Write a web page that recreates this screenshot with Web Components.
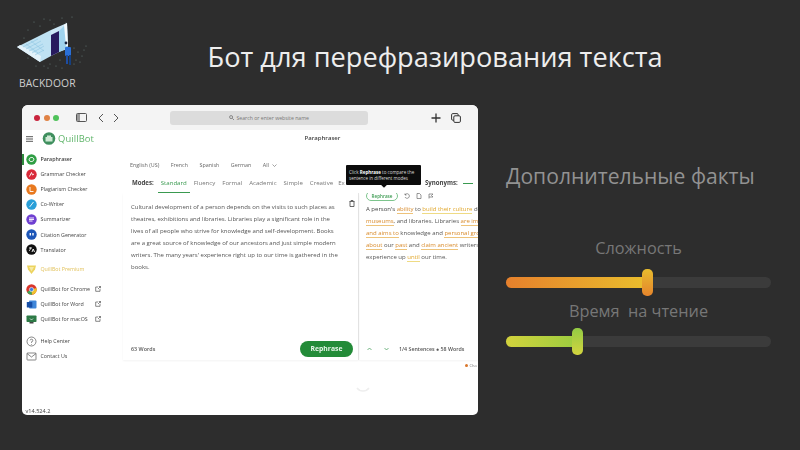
<!doctype html>
<html lang="ru"><head><meta charset="utf-8"><title>Backdoor</title>
<style>
html,body{margin:0;padding:0;background:#2d2d2d}
body{width:800px;height:450px;overflow:hidden;font-family:"Open Sans","Noto Sans",sans-serif}
</style></head><body>
<slide-page>
  <brand-logo slot="logo"></brand-logo>
  <span slot="title">Бот для перефразирования текста</span>
  <browser-window slot="window"></browser-window>
  <facts-panel slot="facts"></facts-panel>
</slide-page>
<script>
function def(name, css, html){
  customElements.define(name, class extends HTMLElement{
    connectedCallback(){
      if(this.shadowRoot) return;
      const r=this.attachShadow({mode:'open'});
      r.innerHTML='<style>'+css+'</style>'+(typeof html==='function'?html(this):html);
    }
  });
}
def('slide-page',`
:host{display:grid;grid-template-columns:22px 456px 28px 265px;grid-template-rows:105px 310px;width:800px;height:450px;color:#eee}
.head{grid-column:1/-1;display:flex;align-items:flex-start}
.logo{width:207.500px;flex:none}
.title{font-size:27.2px;line-height:38px;margin-top:38px;color:#eeeeee;white-space:nowrap}
.win{grid-column:2;grid-row:2}
.facts{grid-column:4;grid-row:2}
`,`<div class="head"><div class="logo"><slot name="logo"></slot></div><div class="title"><slot name="title"></slot></div></div>
<div class="win"><slot name="window"></slot></div><div class="facts"><slot name="facts"></slot></div>`);

def('brand-logo',`
:host{display:block;position:relative;height:105px}
svg{position:absolute;left:14px;top:16px;filter:blur(.35px)}
.t{position:absolute;left:19px;top:76px;font-size:10.3px;line-height:14px;color:#cfcfcf;letter-spacing:.1px}
`,()=>{
 let specks='';const pts=[[20,6],[30,3],[40,8],[48,2],[26,10],[36,4],[58,1],[52,7],[14,14],[60,32],[64,36],[68,40],[62,44],[60,48],[66,46],[70,34],[30,50],[36,48],[42,50],[46,44],[48,52],[34,52],[22,50],[14,42],[72,30],[10,22]];
 pts.forEach(p=>specks+=`<circle cx="${p[0]}" cy="${p[1]}" r=".6" fill="#7d9a96" opacity=".7"/>`);
 return `<svg width="74" height="56" viewBox="0 0 74 56" aria-hidden="true">${specks}
 <polygon points="3,31 37,14 37,40 26,46" fill="#bfe2f3"/>
 <polygon points="3,31 26,46 27,40 6,29" fill="#e4f3fb"/>
 <polygon points="37,14 53,7 53,33 45,36 37,40" fill="#cbe7f6"/>
 <polygon points="37,19 45,15 45,36 37,40" fill="#271a5e"/>
 <polygon points="45,15 53,7 54,32 45,36" fill="#9fd3ee"/>
 <polygon points="50,9 53,7 54,30 52,30" fill="#f6fafc"/>
 <path d="M9 31l15-8M12 33l15-8M15 35l14-7M18 37l12-7M21 39l9-5M12 28l12 9M17 25l13 10" stroke="#8fc6e2" stroke-width=".6"/>
 <rect x="51" y="31" width="6" height="9" rx="1" fill="#2a6fd6"/><rect x="52" y="39" width="2" height="9" fill="#1d4da3"/><rect x="55" y="39" width="2" height="10" fill="#16407f"/>
 <circle cx="52" cy="27" r="1.4" fill="#14213d"/></svg><div class="t">BACKDOOR</div>`;
});

def('browser-window',`
:host{display:flex;flex-direction:column;width:456px;height:310px;background:#fff;border-radius:6px 6px 5px 5px;overflow:hidden;position:relative;color:#444;font-family:"Open Sans",sans-serif;filter:blur(.3px)}
.bar{flex:none;height:25px;background:#f4f4f4;display:flex;align-items:center;padding:0 17px 0 12px}
.dots{display:flex;gap:3.6px}
.dots i{width:6px;height:6px;border-radius:50%}
.ic{margin-left:17px}
.nav{display:flex;gap:9px;margin-left:11px}
.addr{margin-left:51px;width:198px;height:14px;border-radius:3px;background:#dcdcdc;display:flex;align-items:center;justify-content:center;font-size:5.2px;color:#777;gap:2px}
.right{margin-left:auto;display:flex;gap:10px;align-items:center}
.page{flex:1;display:grid;grid-template-columns:99px 1fr;min-height:0}
`,`<div class="bar"><div class="dots"><i style="background:#c9233c"></i><i style="background:#e08244"></i><i style="background:#4fc25a"></i></div>
<svg class="ic" width="11" height="9" viewBox="0 0 11 9"><rect x=".5" y=".5" width="10" height="8" rx="1" fill="none" stroke="#555"/><rect x="1" y="1" width="3" height="7" fill="#999"/></svg>
<div class="nav"><svg width="6" height="10" viewBox="0 0 6 10"><path d="M5 1L1 5l4 4" fill="none" stroke="#555"/></svg><svg width="6" height="10" viewBox="0 0 6 10"><path d="M1 1l4 4-4 4" fill="none" stroke="#555"/></svg></div>
<div class="addr"><svg width="5" height="5" viewBox="0 0 6 6"><circle cx="2.5" cy="2.5" r="1.8" fill="none" stroke="#777"/><path d="M4 4l2 2" stroke="#777"/></svg><span>Search or enter website name</span></div>
<div class="right"><svg width="10" height="10" viewBox="0 0 10 10"><path d="M5 .5v9M.5 5h9" stroke="#333" stroke-width="1.3"/></svg><svg width="10" height="10" viewBox="0 0 10 10"><rect x=".6" y=".6" width="6.6" height="6.6" rx="1.2" fill="none" stroke="#333"/><rect x="2.8" y="2.8" width="6.6" height="6.6" rx="1.2" fill="#f4f4f4" stroke="#333"/></svg></div></div>
<div class="page"><side-nav></side-nav><quill-main></quill-main></div>`);

def('nav-item',`
:host{display:flex;align-items:center;height:15.1px;font-size:5.3px;color:var(--c,#444);white-space:nowrap;position:relative;font-weight:var(--w,400)}
.i{width:11px;height:11px;margin-left:4px;margin-right:3.5px;flex:none;display:flex}
.x{margin-left:auto;flex:none}
::slotted(svg){display:block}
`,h=>`<span class="i"><slot name="icon"></slot></span><slot></slot>${h.hasAttribute('ext')?'<svg class="x" width="6" height="6" viewBox="0 0 6 6"><path d="M3 1H.7v4.3H5V3M3 3l2.5-2.5M3.8.5h1.7v1.7" fill="none" stroke="#555" stroke-width=".7"/></svg>':''}`);

def('side-nav',`
:host{display:flex;flex-direction:column;position:relative;padding-right:20px;box-sizing:border-box;height:285px;width:99px}
.top{height:17px;display:flex;align-items:center;padding-left:4px;gap:8px;flex:none}
.brand{font-size:9.400px;color:#5fb56a;margin-left:-6px;letter-spacing:.1px;white-space:nowrap}
.sel{position:absolute;left:0;top:23.500px;width:2px;height:11px;background:#2e8b3d}
.g1{margin-top:4.500px}.g2{margin-top:4.500px}.g3{margin-top:5px}.g4{margin-top:6.500px}
.ver{margin-top:auto;font-size:5.600px;margin-left:3.500px;line-height:8px;color:#444}
`,()=>{
 const c=(bg,inner)=>`<svg slot="icon" width="11" height="11" viewBox="0 0 11 11"><circle cx="5.5" cy="5.5" r="5.2" fill="${bg}"/>${inner}</svg>`;
 const w='fill="none" stroke="#fff" stroke-width=".9"';
 return `<div class="top"><svg width="8" height="6" viewBox="0 0 8 6"><path d="M0 .7h7M0 3h7M0 5.3h7" stroke="#444" stroke-width=".9"/></svg>
 <svg width="14" height="13" viewBox="0 0 14 13"><circle cx="7" cy="6.5" r="6.3" fill="#3f8f5e"/><path d="M3.5 5h7v4.5h-7zM5 3.5h4V5H5z" fill="#cfe9d5"/></svg><span class="brand">QuillBot</span></div>
 <div class="sel"></div>
 <div class="g1">
 <nav-item style="--w:600">${c('#2f9e44',`<path d="M3 6a2.6 2.6 0 0 1 5-1M8 5a2.6 2.6 0 0 1-5 1" ${w}/>`)}Paraphraser</nav-item>
 <nav-item>${c('#d92a3a',`<path d="M3.5 7.5l2-4 1 2.5 1.5-1" ${w}/>`)}Grammar Checker</nav-item>
 <nav-item>${c('#e8791f',`<path d="M4 3v4.5h3.5" ${w}/>`)}Plagiarism Checker</nav-item>
 <nav-item>${c('#2a9fd8',`<path d="M7.5 3L4 7.5 3.5 8" ${w}/>`)}Co-Writer</nav-item>
 <nav-item>${c('#6f3fd1',`<path d="M3 4h5M3 5.5h5M3 7h3.5" ${w}/>`)}Summarizer</nav-item>
 <nav-item>${c('#1d56b8',`<path d="M4.3 4v2.5M7 4v2.5" fill="none" stroke="#fff" stroke-width="1.4"/>`)}Citation Generator</nav-item>
 <nav-item>${c('#111',`<path d="M3 4h3M4.5 3.5c0 2-.8 3-1.5 3.5M6 8l1.2-3L8.5 8" ${w}/>`)}Translator</nav-item>
 </div>
 <div class="g2"><nav-item style="--c:#e2c25c"><svg slot="icon" width="11" height="11" viewBox="0 0 11 11"><path d="M1 1.5h9l-1 4-3.5 4.5L2 5.5z" fill="#ecd35e"/><path d="M3 3h5L5.5 7.5z" fill="#f6e9a3"/></svg>QuillBot Premium</nav-item></div>
 <div class="g3">
 <nav-item ext><svg slot="icon" width="11" height="11" viewBox="0 0 11 11"><circle cx="5.5" cy="5.5" r="5.2" fill="#d9352b"/><path d="M5.5 5.5L1 8a5.2 5.2 0 0 0 5 2.7z" fill="#3aa655"/><path d="M5.5 5.5l.5 5.2A5.2 5.2 0 0 0 10.500 4z" fill="#efc12c"/><circle cx="5.5" cy="5.500" r="2.100" fill="#3f7fe0" stroke="#fff" stroke-width=".6"/></svg>QuillBot for Chrome</nav-item>
 <nav-item ext><svg slot="icon" width="11" height="11" viewBox="0 0 11 11"><rect x="3" y="1.500" width="7.500" height="8" rx="1" fill="#3f86d9"/><rect x=".8" y="3" width="5.500" height="5.500" rx=".6" fill="#174ea6"/></svg>QuillBot for Word</nav-item>
 <nav-item ext><svg slot="icon" width="11" height="11" viewBox="0 0 11 11"><rect x=".5" y="1.500" width="10" height="6.500" rx=".8" fill="#2d7a46"/><rect x="3.500" y="8" width="4" height="1.500" fill="#444"/><path d="M4 4.500l1.500 1.500L7 4.500" stroke="#fff" stroke-width=".7" fill="none"/></svg>QuillBot for macOS</nav-item>
 </div>
 <div class="g4">
 <nav-item><svg slot="icon" width="11" height="11" viewBox="0 0 11 11"><circle cx="5.500" cy="5.500" r="4.500" fill="none" stroke="#555" stroke-width=".7"/><path d="M4.200 4.300a1.300 1.300 0 1 1 1.300 1.500v1M5.500 8v.7" fill="none" stroke="#555" stroke-width=".7"/></svg>Help Center</nav-item>
 <nav-item><svg slot="icon" width="11" height="11" viewBox="0 0 11 11"><rect x="1" y="2" width="9" height="7" rx=".6" fill="none" stroke="#555" stroke-width=".7"/><path d="M1 2.500l4.500 3.500L10 2.500" fill="none" stroke="#555" stroke-width=".7"/></svg>Contact Us</nav-item>
 </div>
 <div class="ver">v14.524.2</div>`;
});

def('quill-main',`
:host{display:flex;flex-direction:column;position:relative;min-width:0;overflow:hidden;height:285px;font-size:6px}
.ttl{height:17px;text-align:center;font-size:6px;font-weight:600;color:#444;line-height:17px;padding-left:46px}
.lang{display:flex;gap:11.500px;padding-left:9px;height:18px;align-items:center;margin-top:9px;font-size:5.400px;color:#666;flex:none}
.lang svg{margin-left:3px;vertical-align:middle}
.modes{display:flex;align-items:flex-start;padding-left:11px;height:16px;font-size:6.100px;color:#777;white-space:nowrap;gap:7px;margin-top:3px;line-height:12px;flex:none}
.modes b{color:#444;font-weight:700;margin-right:0}
.modes .on{color:#3a9a50;border-bottom:.7px solid #3a9a50;height:15px;padding:0 3px;margin:0 -3px}
.modes .ex{margin-left:-2px}
.syn{position:absolute;left:304px;top:47px;font-size:6.100px;font-weight:700;color:#444;display:flex;align-items:center;gap:5px;line-height:12px}
.syn i{width:10px;height:1px;background:#3a9a50}
.panes{flex:none;height:167px;display:grid;grid-template-columns:236px 1fr;margin-left:2px}
.l{display:flex;flex-direction:column;position:relative;padding:8px 5px 0 8px;border-right:1px solid #e6e6e6;box-shadow:0 1px 2px rgba(0,0,0,.05)}
.r{display:flex;flex-direction:column;padding:0 0 0 7px;position:relative;overflow:hidden;box-shadow:0 1px 2px rgba(0,0,0,.05)}
p{margin:0;line-height:12.100px;font-size:6px;color:#555;white-space:nowrap}
.trash{position:absolute;right:3px;top:7px}
.foot{margin-top:auto;height:23px;display:flex;align-items:center;justify-content:space-between;font-size:5.400px;font-weight:600;color:#555;flex:none}
.btn{width:53px;height:16px;border-radius:8px;background:#238b38;color:#e8f6ea;font-size:6.800px;font-weight:700;display:flex;align-items:center;justify-content:center}
.tools{height:17px;display:flex;align-items:center;gap:6px;margin-top:-6px;flex:none}
.pill{border:.7px solid #7cc48c;border-radius:5px;font-size:4.600px;font-weight:600;color:#3a9a50;width:32px;box-sizing:border-box;text-align:center;line-height:8px}
.rp{margin-top:-1px}
.o{color:#d88a2a;border-bottom:.5px solid #eec37a}.y{color:#e1a72b;border-bottom:.5px solid #efdb84}.b{color:#444}
.rf{margin-top:auto;height:23px;display:flex;align-items:center;font-size:5.300px;color:#555;font-weight:600;padding-left:1px;flex:none}
.tip{position:absolute;left:225px;top:35px;width:75px;height:20px;background:#0c0c0c;border-radius:1px;color:#ddd;font-size:4.500px;line-height:6.400px;box-sizing:border-box;padding:3.500px 3px;z-index:3}
.tip b{color:#fff}
.tip:after{content:"";position:absolute;left:36px;bottom:-2px;width:4px;height:4px;background:#0c0c0c;transform:rotate(45deg)}
.legend{position:absolute;left:344px;top:233px;font-size:4px;line-height:5px;color:#777;display:flex;align-items:center;gap:1.500px;white-space:nowrap}
.legend i{width:3px;height:3px;border-radius:50%;background:#d9762b}
.chev{position:absolute;left:235px;top:257px}
`,`<div class="ttl">Paraphraser</div>
<div class="lang"><span>English (US)</span><span>French</span><span>Spanish</span><span>German</span><span>All<svg width="5" height="3" viewBox="0 0 5 3"><path d="M.5.5l2 2 2-2" fill="none" stroke="#666" stroke-width=".6"/></svg></span></div>
<div class="modes"><b>Modes:</b><span class="on">Standard</span><span>Fluency</span><span>Formal</span><span>Academic</span><span>Simple</span><span>Creative</span><span class="ex">Ex</span></div>
<div class="syn">Synonyms: <i></i></div>
<div class="tip">Click <b>Rephrase</b> to compare the sentence in different modes</div>
<div class="panes">
<div class="l"><p>Cultural development of a person depends on the visits to such places as<br>theatres, exhibitions and libraries. Libraries play a significant role in the<br>lives of all people who strive for knowledge and self-development. Books<br>are a great source of knowledge of our ancestors and just simple modern<br>writers. The many years' experience right up to our time is gathered in the<br>books.</p>
<svg class="trash" width="6" height="7" viewBox="0 0 6 7"><path d="M.5 1.500h5M1 1.500V6.500h4V1.500M2 1V.5h2V1" fill="none" stroke="#444" stroke-width=".8"/></svg>
<div class="foot"><span>63 Words</span><span class="btn">Rephrase</span></div></div>
<div class="r"><div class="tools"><span class="pill">Rephrase</span><svg width="6" height="6" viewBox="0 0 6 6"><path d="M1 2a2.300 2.300 0 1 1 0 2M1 .5V2h1.500" fill="none" stroke="#555" stroke-width=".6"/></svg><svg width="6" height="6" viewBox="0 0 6 6"><path d="M1 .5h2.500L5 2v3.500H1z" fill="none" stroke="#555" stroke-width=".6"/></svg><svg width="6" height="6" viewBox="0 0 6 6"><path d="M1 5.500V1h4L3.500 2.500 5 4H1" fill="none" stroke="#555" stroke-width=".6"/></svg></div>
<p class="rp"><span class="b">A person's</span> <span class="o">ability</span> to <span class="y">build their culture</span> depends on<br><span class="o">museums</span>, and libraries. Libraries <span class="o">are immensely</span><br><span class="o">and aims to</span> knowledge and <span class="o">personal growth</span><br><span class="o">about</span> our <span class="o">past</span> and <span class="o">claim ancient</span> writers<br>experience up <span class="y">until</span> our time.</p>
<div class="rf"><svg width="5" height="4" viewBox="0 0 5 4"><path d="M.5 3L2.500 1l2 2" fill="none" stroke="#3a9a50" stroke-width=".7"/></svg><svg style="margin-left:12px" width="5" height="4" viewBox="0 0 5 4"><path d="M.5 1l2 2 2-2" fill="none" stroke="#3a9a50" stroke-width=".7"/></svg><span style="margin-left:10px;white-space:nowrap">1/4 Sentences &#9679; 58 Words</span></div></div>
</div>
<div class="legend"><i></i><span>Cha</span></div>
<svg class="chev" width="14" height="6" viewBox="0 0 14 6"><path d="M1 1c3 4 9 4 12 0" fill="none" stroke="#eee" stroke-width="1.500"/></svg>`);

def('meter-bar',`
:host{display:block}
.label{text-align:center;color:#777;font-size:16.300px;line-height:22px;margin-bottom:var(--g)}
.track{height:11px;background:#3b3b3b;border-radius:6px;position:relative}
.fill{position:absolute;left:0;top:0;bottom:0;border-radius:6px;width:var(--v);background:linear-gradient(90deg,var(--a),var(--b))}
.thumb{position:absolute;left:calc(var(--v) - 5.500px);top:-8px;width:11px;height:27px;border-radius:5px;background:linear-gradient(var(--t1),var(--t2))}
`,h=>`<div class="label">${h.getAttribute('label')}</div><div class="track"><div class="fill"></div><div class="thumb"></div></div>`);

def('facts-panel',`
:host{display:flex;flex-direction:column;position:relative;height:310px}
h2{margin:58px 0 0;font-weight:400;font-size:21.100px;line-height:26px;color:#929292;white-space:nowrap}
.a{margin-top:48px;--g:18px}.b{margin-top:12px;--g:14px}
`,`<h2>Дополнительные факты</h2>
<meter-bar class="a" label="Сложность" style="--v:53.400%;--a:#e6802c;--b:#eabf2d;--t1:#e8bc2e;--t2:#e5842c"></meter-bar>
<meter-bar class="b" label="Время&nbsp; на чтение" style="--v:26.800%;--a:#d2d23c;--b:#9ccd40;--t1:#93cb44;--t2:#d3d43f"></meter-bar>`);
</script></body></html>
